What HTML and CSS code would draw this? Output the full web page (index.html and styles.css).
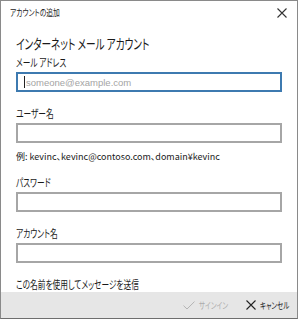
FILE: index.html
```html
<!DOCTYPE html>
<html lang="ja">
<head>
  <meta charset="UTF-8">
  <title>アカウントの追加</title>
  <link rel="stylesheet" href="styles.css">
</head>
<body>
  <div class="window">
    <div class="titlebar">
      <span class="title">アカウントの追加</span>
      <svg class="close" width="10" height="10" viewBox="0 0 10 10">
        <path d="M0.5 0.5 L9.5 9.5 M9.5 0.5 L0.5 9.5" stroke="#333" stroke-width="1.1" fill="none"/>
      </svg>
    </div>

    <div class="content">
      <h1 class="heading">インターネット メール アカウント</h1>

      <label class="label first">メール アドレス</label>
      <div class="input focused"><span class="caret"></span><span class="placeholder">someone@example.com</span></div>

      <label class="label">ユーザー名</label>
      <div class="input"></div>
      <p class="hint">例: kevinc、kevinc@contoso.com、domain¥kevinc</p>

      <label class="label after-hint">パスワード</label>
      <div class="input"></div>

      <label class="label">アカウント名</label>
      <div class="input"></div>

      <label class="label">この名前を使用してメッセージを送信</label>
      <div class="input"></div>
    </div>

    <div class="footer">
      <span class="action disabled">
        <svg width="12" height="9" viewBox="0 0 12 9">
          <path d="M0.5 4.6 L4 8 L11.5 0.6" stroke="#b4b4b4" stroke-width="1" fill="none"/>
        </svg>
        <span class="action-text"><span>サインイン</span></span>
      </span>
      <span class="action">
        <svg width="10" height="10" viewBox="0 0 10 10">
          <path d="M0.5 0.5 L9.5 9.5 M9.5 0.5 L0.5 9.5" stroke="#222" stroke-width="1.1" fill="none"/>
        </svg>
        <span class="action-text"><span>キャンセル</span></span>
      </span>
    </div>
  </div>
</body>
</html>
```

FILE: styles.css
```css
html, body {
  margin: 0;
  height: 100%;
}

body {
  font-family: "Noto Sans CJK JP", "Noto Sans", sans-serif;
  font-feature-settings: "palt";
  color: #1a1a1a;
  background: #fff;
}

.window {
  box-sizing: border-box;
  height: 319px;
  border: 1px solid #8a8a8a;
  border-bottom-color: #6e6e6e;
  display: flex;
  flex-direction: column;
  overflow: hidden;
  background: #fff;
}

/* the dialog font is a narrow one, so squeeze the CJK text a bit */
.title,
.heading,
.label {
  transform-origin: left center;
}

.titlebar {
  height: 23px;
  flex: none;
  display: flex;
  align-items: center;
  justify-content: space-between;
  padding: 0 10px 0 9px;
}

.title {
  display: inline-block;
  font-size: 9px;
  color: #222;
  transform: scaleX(0.75);
}

.content {
  flex: 1;
  overflow: hidden;
  padding: 0 15px;
}

.heading {
  margin: 9px 0 0;
  font-size: 14px;
  font-weight: normal;
  line-height: 20px;
  transform: scaleX(0.69);
}

.label {
  display: block;
  font-size: 11px;
  line-height: 16px;
  margin: 13px 0 2px;
  transform: scaleX(0.7);
}

.label.first {
  margin-top: 1px;
}

.label.after-hint {
  margin-top: 9px;
}

.input {
  box-sizing: border-box;
  height: 20px;
  border: 2px solid #a6a6a6;
  background: #fff;
  display: flex;
  align-items: center;
  padding-left: 6px;
}

.input.focused {
  border-color: #3d7ab0;
}

.caret {
  width: 1px;
  height: 12px;
  background: #222;
  margin-right: 1px;
}

.placeholder {
  font-family: "Liberation Sans", Arial, sans-serif;
  font-size: 9.5px;
  color: #a4a4a4;
}

.hint {
  margin: 6px 0 0;
  font-size: 9px;
  line-height: 16px;
}

.footer {
  flex: none;
  height: 26px;
  background: #e6e6e6;
  display: flex;
  align-items: center;
  justify-content: flex-end;
  gap: 17px;
  padding-right: 7px;
}

.action {
  display: flex;
  align-items: center;
  gap: 4px;
  font-size: 9px;
  color: #1a1a1a;
}

.action.disabled {
  color: #ababab;
}

.action-text {
  width: 30px;
  white-space: nowrap;
}

.action-text span {
  display: inline-block;
  transform: scaleX(0.72);
  transform-origin: left center;
}
```
